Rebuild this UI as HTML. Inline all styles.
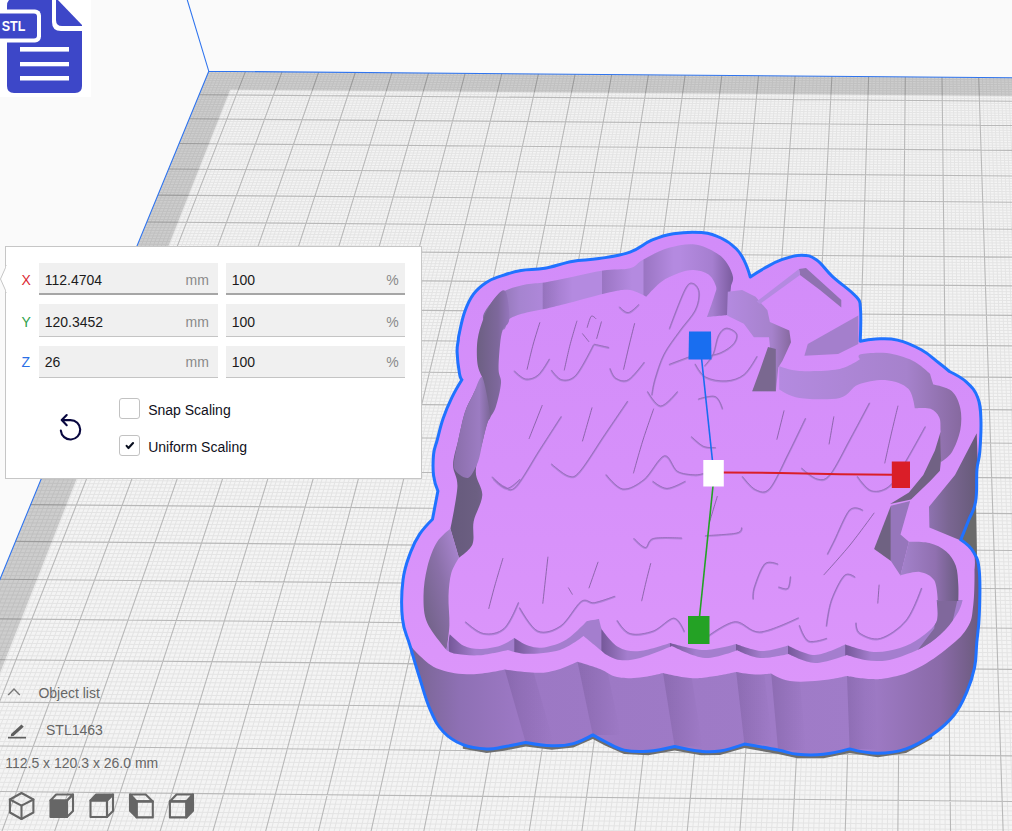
<!DOCTYPE html>
<html><head><meta charset="utf-8">
<style>
html,body{margin:0;padding:0;width:1012px;height:831px;overflow:hidden;background:#fafafa;font-family:"Liberation Sans",sans-serif;}
#scene{position:absolute;left:0;top:0;}
.abs{position:absolute;}
#stl{position:absolute;left:0;top:0;width:91px;height:97px;background:#fff;}
#panel{position:absolute;left:5px;top:246px;width:417px;height:233px;background:#fff;border:1px solid #c6c6c6;box-sizing:border-box;}
.lbl{position:absolute;font-size:14px;}
.fld{position:absolute;background:#f0f0f0;border-bottom:1px solid #c4c4c4;box-sizing:border-box;height:32px;}
.fld .v{position:absolute;left:5px;top:8px;font-size:14px;color:#1a1a1a;}
.fld .u{position:absolute;right:8px;top:8px;font-size:14px;color:#8c8c8c;}
.cb{position:absolute;width:21px;height:21px;border:1px solid #c2c2c2;border-radius:3px;box-sizing:border-box;background:#fff;}
.t{position:absolute;font-size:14px;line-height:14px;white-space:nowrap;}
.lab{}
.val{color:#1b1b1b;}
.unit{color:#8a8a8a;}
.ctext{position:absolute;font-size:14px;color:#101020;}
.scn{position:absolute;font-size:14px;color:#666;}
</style></head><body>
<svg id="scene" width="1012" height="831" viewBox="0 0 1012 831">
<polygon points="208.8,71.3 1070.6,78.2 1140.5,899.7 -126.5,886.9" fill="#f4f4f4"/>
<path d="M212.5 71.3L-121.2 886.9M216.2 71.3L-115.8 887.0M219.8 71.4L-110.4 887.0M223.5 71.4L-105.0 887.1M227.1 71.4L-99.7 887.1M230.8 71.5L-94.3 887.2M234.5 71.5L-88.9 887.2M238.1 71.5L-83.5 887.3M241.8 71.5L-78.2 887.4M249.1 71.6L-67.4 887.5M252.8 71.6L-62.0 887.5M256.4 71.7L-56.7 887.6M260.1 71.7L-51.3 887.6M263.7 71.7L-45.9 887.7M267.4 71.8L-40.5 887.7M271.1 71.8L-35.2 887.8M274.7 71.8L-29.8 887.8M278.4 71.8L-24.4 887.9M285.7 71.9L-13.7 888.0M289.4 71.9L-8.3 888.1M293.0 72.0L-2.9 888.1M296.7 72.0L2.5 888.2M300.3 72.0L7.9 888.2M304.0 72.0L13.2 888.3M307.7 72.1L18.6 888.3M311.3 72.1L24.0 888.4M315.0 72.1L29.4 888.4M322.3 72.2L40.1 888.6M326.0 72.2L45.5 888.6M329.6 72.2L50.9 888.7M333.3 72.3L56.3 888.7M336.9 72.3L61.6 888.8M340.6 72.3L67.0 888.8M344.3 72.4L72.4 888.9M347.9 72.4L77.8 888.9M351.6 72.4L83.2 889.0M358.9 72.5L93.9 889.1M362.6 72.5L99.3 889.1M366.2 72.5L104.7 889.2M369.9 72.6L110.1 889.3M373.6 72.6L115.4 889.3M377.2 72.6L120.8 889.4M380.9 72.7L126.2 889.4M384.5 72.7L131.6 889.5M388.2 72.7L137.0 889.5M395.5 72.8L147.7 889.6M399.2 72.8L153.1 889.7M402.9 72.8L158.5 889.7M406.5 72.9L163.9 889.8M410.2 72.9L169.3 889.9M413.8 72.9L174.6 889.9M417.5 73.0L180.0 890.0M421.2 73.0L185.4 890.0M424.8 73.0L190.8 890.1M432.2 73.1L201.6 890.2M435.8 73.1L206.9 890.2M439.5 73.1L212.3 890.3M443.2 73.2L217.7 890.3M446.8 73.2L223.1 890.4M450.5 73.2L228.5 890.5M454.1 73.2L233.9 890.5M457.8 73.3L239.2 890.6M461.5 73.3L244.6 890.6M468.8 73.4L255.4 890.7M472.5 73.4L260.8 890.8M476.1 73.4L266.2 890.8M479.8 73.5L271.5 890.9M483.5 73.5L276.9 890.9M487.1 73.5L282.3 891.0M490.8 73.5L287.7 891.1M494.4 73.6L293.1 891.1M498.1 73.6L298.5 891.2M505.4 73.7L309.2 891.3M509.1 73.7L314.6 891.3M512.8 73.7L320.0 891.4M516.4 73.7L325.4 891.4M520.1 73.8L330.8 891.5M523.8 73.8L336.2 891.5M527.4 73.8L341.6 891.6M531.1 73.9L346.9 891.7M534.8 73.9L352.3 891.7M542.1 73.9L363.1 891.8M545.8 74.0L368.5 891.9M549.4 74.0L373.9 891.9M553.1 74.0L379.3 892.0M556.7 74.1L384.7 892.0M560.4 74.1L390.1 892.1M564.1 74.1L395.4 892.1M567.7 74.2L400.8 892.2M571.4 74.2L406.2 892.3M578.7 74.2L417.0 892.4M582.4 74.3L422.4 892.4M586.1 74.3L427.8 892.5M589.7 74.3L433.2 892.5M593.4 74.4L438.6 892.6M597.1 74.4L443.9 892.6M600.7 74.4L449.3 892.7M604.4 74.4L454.7 892.7M608.1 74.5L460.1 892.8M615.4 74.5L470.9 892.9M619.1 74.6L476.3 893.0M622.7 74.6L481.7 893.0M626.4 74.6L487.1 893.1M630.1 74.7L492.5 893.1M633.7 74.7L497.8 893.2M637.4 74.7L503.2 893.2M641.1 74.7L508.6 893.3M644.7 74.8L514.0 893.3M652.1 74.8L524.8 893.5M655.7 74.9L530.2 893.5M659.4 74.9L535.6 893.6M663.1 74.9L541.0 893.6M666.7 74.9L546.4 893.7M670.4 75.0L551.8 893.7M674.1 75.0L557.2 893.8M677.7 75.0L562.6 893.8M681.4 75.1L567.9 893.9M688.7 75.1L578.7 894.0M692.4 75.2L584.1 894.1M696.1 75.2L589.5 894.1M699.8 75.2L594.9 894.2M703.4 75.2L600.3 894.2M707.1 75.3L605.7 894.3M710.8 75.3L611.1 894.3M714.4 75.3L616.5 894.4M718.1 75.4L621.9 894.4M725.4 75.4L632.7 894.5M729.1 75.4L638.1 894.6M732.8 75.5L643.5 894.7M736.4 75.5L648.9 894.7M740.1 75.5L654.3 894.8M743.8 75.6L659.7 894.8M747.4 75.6L665.1 894.9M751.1 75.6L670.4 894.9M754.8 75.6L675.8 895.0M762.1 75.7L686.6 895.1M765.8 75.7L692.0 895.1M769.5 75.8L697.4 895.2M773.1 75.8L702.8 895.3M776.8 75.8L708.2 895.3M780.5 75.9L713.6 895.4M784.1 75.9L719.0 895.4M787.8 75.9L724.4 895.5M791.5 75.9L729.8 895.5M798.8 76.0L740.6 895.6M802.5 76.0L746.0 895.7M806.2 76.1L751.4 895.7M809.8 76.1L756.8 895.8M813.5 76.1L762.2 895.9M817.2 76.1L767.6 895.9M820.8 76.2L773.0 896.0M824.5 76.2L778.4 896.0M828.2 76.2L783.8 896.1M835.5 76.3L794.6 896.2M839.2 76.3L800.0 896.2M842.9 76.4L805.4 896.3M846.5 76.4L810.8 896.3M850.2 76.4L816.2 896.4M853.9 76.4L821.6 896.5M857.5 76.5L827.0 896.5M861.2 76.5L832.4 896.6M864.9 76.5L837.8 896.6M872.2 76.6L848.6 896.7M875.9 76.6L854.0 896.8M879.6 76.6L859.4 896.8M883.2 76.7L864.8 896.9M886.9 76.7L870.2 896.9M890.6 76.7L875.6 897.0M894.3 76.8L881.0 897.1M897.9 76.8L886.4 897.1M901.6 76.8L891.8 897.2M909.0 76.9L902.6 897.3M912.6 76.9L908.0 897.3M916.3 76.9L913.4 897.4M920.0 77.0L918.8 897.4M923.6 77.0L924.2 897.5M927.3 77.0L929.6 897.5M931.0 77.1L935.0 897.6M934.7 77.1L940.4 897.7M938.3 77.1L945.8 897.7M945.7 77.2L956.7 897.8M949.3 77.2L962.1 897.9M953.0 77.2L967.5 897.9M956.7 77.3L972.9 898.0M960.4 77.3L978.3 898.0M964.0 77.3L983.7 898.1M967.7 77.4L989.1 898.1M971.4 77.4L994.5 898.2M975.1 77.4L999.9 898.3M982.4 77.5L1010.7 898.4M986.1 77.5L1016.1 898.4M989.8 77.5L1021.5 898.5M993.4 77.6L1026.9 898.5M997.1 77.6L1032.3 898.6M1000.8 77.6L1037.7 898.6M1004.5 77.6L1043.1 898.7M1008.1 77.7L1048.5 898.7M1011.8 77.7L1054.0 898.8M1019.1 77.8L1064.8 898.9M1022.8 77.8L1070.2 899.0M1026.5 77.8L1075.6 899.0M1030.2 77.9L1081.0 899.1M1033.8 77.9L1086.4 899.1M1037.5 77.9L1091.8 899.2M1041.2 77.9L1097.2 899.2M1044.9 78.0L1102.6 899.3M1048.5 78.0L1108.0 899.3M1055.9 78.1L1118.8 899.5M1059.6 78.1L1124.3 899.5M1063.2 78.1L1129.7 899.6M1066.9 78.1L1135.1 899.6M1070.6 78.2L1140.5 899.7M207.9 73.6L1070.8 80.5M206.9 75.9L1071.0 82.8M206.0 78.2L1071.2 85.2M205.0 80.6L1071.4 87.5M204.1 82.9L1071.6 89.9M203.1 85.3L1071.8 92.2M202.1 87.6L1072.0 94.6M201.2 90.0L1072.2 97.0M200.2 92.3L1072.4 99.4M198.2 97.1L1072.8 104.1M197.3 99.5L1073.0 106.5M196.3 101.9L1073.2 108.9M195.3 104.3L1073.4 111.4M194.3 106.7L1073.6 113.8M193.3 109.1L1073.8 116.2M192.3 111.5L1074.0 118.6M191.3 113.9L1074.2 121.1M190.3 116.3L1074.4 123.5M188.3 121.2L1074.9 128.4M187.3 123.7L1075.1 130.9M186.3 126.1L1075.3 133.4M185.3 128.6L1075.5 135.8M184.3 131.1L1075.7 138.3M183.2 133.5L1075.9 140.8M182.2 136.0L1076.1 143.3M181.2 138.5L1076.3 145.8M180.2 141.0L1076.6 148.3M178.1 146.0L1077.0 153.4M177.1 148.6L1077.2 155.9M176.0 151.1L1077.4 158.5M175.0 153.6L1077.6 161.0M173.9 156.2L1077.9 163.6M172.9 158.7L1078.1 166.1M171.8 161.3L1078.3 168.7M170.8 163.8L1078.5 171.3M169.7 166.4L1078.7 173.9M167.6 171.5L1079.2 179.1M166.6 174.1L1079.4 181.7M165.5 176.7L1079.6 184.3M164.4 179.3L1079.8 186.9M163.3 181.9L1080.1 189.5M162.3 184.6L1080.3 192.2M161.2 187.2L1080.5 194.8M160.1 189.8L1080.7 197.5M159.0 192.5L1081.0 200.1M156.8 197.8L1081.4 205.5M155.7 200.4L1081.7 208.2M154.6 203.1L1081.9 210.8M153.5 205.8L1082.1 213.5M152.4 208.5L1082.3 216.2M151.3 211.2L1082.6 219.0M150.2 213.9L1082.8 221.7M149.1 216.6L1083.0 224.4M148.0 219.3L1083.3 227.1M145.7 224.8L1083.7 232.6M144.6 227.5L1084.0 235.4M143.5 230.3L1084.2 238.2M142.3 233.0L1084.4 241.0M141.2 235.8L1084.7 243.7M140.1 238.6L1084.9 246.5M138.9 241.3L1085.2 249.3M137.8 244.1L1085.4 252.1M136.6 246.9L1085.6 255.0M134.3 252.6L1086.1 260.6M133.1 255.4L1086.4 263.5M132.0 258.2L1086.6 266.3M130.8 261.1L1086.8 269.2M129.6 263.9L1087.1 272.0M128.5 266.8L1087.3 274.9M127.3 269.6L1087.6 277.8M126.1 272.5L1087.8 280.7M124.9 275.4L1088.1 283.6M122.5 281.2L1088.6 289.4M121.3 284.1L1088.8 292.4M120.1 287.0L1089.1 295.3M118.9 289.9L1089.3 298.2M117.7 292.9L1089.6 301.2M116.5 295.8L1089.8 304.2M115.3 298.8L1090.1 307.1M114.1 301.7L1090.3 310.1M112.9 304.7L1090.6 313.1M110.4 310.7L1091.1 319.1M109.2 313.7L1091.3 322.1M107.9 316.7L1091.6 325.2M106.7 319.7L1091.9 328.2M105.4 322.7L1092.1 331.2M104.2 325.8L1092.4 334.3M102.9 328.8L1092.6 337.4M101.7 331.9L1092.9 340.4M100.4 334.9L1093.2 343.5M97.9 341.1L1093.7 349.7M96.6 344.2L1094.0 352.8M95.4 347.3L1094.2 356.0M94.1 350.4L1094.5 359.1M92.8 353.5L1094.8 362.2M91.5 356.6L1095.0 365.4M90.2 359.8L1095.3 368.5M88.9 362.9L1095.6 371.7M87.6 366.1L1095.8 374.9M85.0 372.4L1096.4 381.3M83.7 375.6L1096.7 384.5M82.4 378.8L1096.9 387.7M81.1 382.0L1097.2 391.0M79.7 385.2L1097.5 394.2M78.4 388.5L1097.8 397.4M77.1 391.7L1098.0 400.7M75.7 394.9L1098.3 404.0M74.4 398.2L1098.6 407.3M71.7 404.8L1099.2 413.9M70.4 408.0L1099.4 417.2M69.0 411.3L1099.7 420.5M67.6 414.7L1100.0 423.8M66.3 418.0L1100.3 427.2M64.9 421.3L1100.6 430.5M63.5 424.7L1100.9 433.9M62.1 428.0L1101.1 437.3M60.8 431.4L1101.4 440.7M58.0 438.1L1102.0 447.5M56.6 441.5L1102.3 450.9M55.2 444.9L1102.6 454.3M53.8 448.4L1102.9 457.8M52.4 451.8L1103.2 461.2M51.0 455.2L1103.5 464.7M49.5 458.7L1103.8 468.2M48.1 462.2L1104.1 471.7M46.7 465.6L1104.4 475.2M43.8 472.6L1105.0 482.2M42.4 476.1L1105.3 485.7M40.9 479.7L1105.6 489.3M39.5 483.2L1105.9 492.9M38.0 486.7L1106.2 496.4M36.5 490.3L1106.5 500.0M35.1 493.9L1106.8 503.6M33.6 497.4L1107.1 507.2M32.1 501.0L1107.4 510.8M29.2 508.3L1108.0 518.1M27.7 511.9L1108.3 521.8M26.2 515.5L1108.6 525.4M24.7 519.2L1109.0 529.1M23.2 522.8L1109.3 532.8M21.6 526.5L1109.6 536.5M20.1 530.2L1109.9 540.2M18.6 533.9L1110.2 544.0M17.1 537.6L1110.5 547.7M14.0 545.1L1111.2 555.2M12.5 548.8L1111.5 559.0M10.9 552.6L1111.8 562.8M9.4 556.4L1112.1 566.6M7.8 560.2L1112.5 570.4M6.2 564.0L1112.8 574.2M4.7 567.8L1113.1 578.1M3.1 571.6L1113.5 582.0M1.5 575.5L1113.8 585.8M-1.7 583.2L1114.4 593.6M-3.3 587.1L1114.8 597.5M-4.9 591.0L1115.1 601.5M-6.5 594.9L1115.4 605.4M-8.1 598.8L1115.8 609.3M-9.7 602.8L1116.1 613.3M-11.3 606.7L1116.5 617.3M-13.0 610.7L1116.8 621.3M-14.6 614.7L1117.1 625.3M-17.9 622.7L1117.8 633.4M-19.5 626.7L1118.2 637.4M-21.2 630.7L1118.5 641.5M-22.9 634.8L1118.9 645.6M-24.5 638.8L1119.2 649.7M-26.2 642.9L1119.6 653.8M-27.9 647.0L1119.9 657.9M-29.6 651.1L1120.3 662.0M-31.3 655.2L1120.6 666.2M-34.7 663.5L1121.3 674.5M-36.4 667.7L1121.7 678.7M-38.1 671.9L1122.0 682.9M-39.9 676.1L1122.4 687.2M-41.6 680.3L1122.8 691.4M-43.3 684.5L1123.1 695.7M-45.1 688.7L1123.5 700.0M-46.8 693.0L1123.9 704.2M-48.6 697.3L1124.2 708.6M-52.1 705.9L1125.0 717.2M-53.9 710.2L1125.3 721.6M-55.7 714.5L1125.7 725.9M-57.5 718.9L1126.1 730.3M-59.3 723.2L1126.5 734.7M-61.1 727.6L1126.8 739.1M-62.9 732.0L1127.2 743.6M-64.7 736.4L1127.6 748.0M-66.5 740.9L1128.0 752.5M-70.2 749.8L1128.7 761.5M-72.0 754.3L1129.1 766.0M-73.9 758.8L1129.5 770.5M-75.7 763.3L1129.9 775.1M-77.6 767.8L1130.3 779.6M-79.5 772.4L1130.7 784.2M-81.3 776.9L1131.1 788.8M-83.2 781.5L1131.4 793.5M-85.1 786.1L1131.8 798.1M-88.9 795.4L1132.6 807.4M-90.8 800.0L1133.0 812.1M-92.7 804.7L1133.4 816.8M-94.7 809.4L1133.8 821.5M-96.6 814.1L1134.2 826.3M-98.5 818.8L1134.6 831.0M-100.5 823.5L1135.1 835.8M-102.5 828.3L1135.5 840.6M-104.4 833.1L1135.9 845.4M-108.4 842.7L1136.7 855.1M-110.4 847.5L1137.1 860.0M-112.4 852.4L1137.5 864.9M-114.4 857.2L1137.9 869.8M-116.4 862.1L1138.4 874.7M-118.4 867.0L1138.8 879.7M-120.4 872.0L1139.2 884.7M-122.4 876.9L1139.6 889.6M-124.5 881.9L1140.1 894.6" stroke="#e4e4e4" stroke-width="1" fill="none"/>
<path d="M245.4 71.6L-72.8 887.4M282.0 71.9L-19.0 888.0M318.6 72.2L34.7 888.5M355.3 72.5L88.5 889.0M391.9 72.7L142.3 889.6M428.5 73.0L196.2 890.1M465.1 73.3L250.0 890.7M501.8 73.6L303.9 891.2M538.4 73.9L357.7 891.8M575.1 74.2L411.6 892.3M611.7 74.5L465.5 892.9M648.4 74.8L519.4 893.4M685.1 75.1L573.3 893.9M721.8 75.4L627.3 894.5M758.5 75.7L681.2 895.0M795.1 76.0L735.2 895.6M831.9 76.3L789.2 896.1M868.6 76.6L843.2 896.7M905.3 76.9L897.2 897.2M942.0 77.1L951.3 897.8M978.7 77.4L1005.3 898.3M1015.5 77.7L1059.4 898.9M1052.2 78.0L1113.4 899.4M199.2 94.7L1072.6 101.7M189.3 118.8L1074.7 126.0M179.1 143.5L1076.8 150.9M168.7 169.0L1079.0 176.5M157.9 195.1L1081.2 202.8M146.9 222.0L1083.5 229.9M135.5 249.7L1085.9 257.8M123.7 278.3L1088.3 286.5M111.6 307.7L1090.8 316.1M99.2 338.0L1093.4 346.6M86.3 369.2L1096.1 378.1M73.1 401.5L1098.9 410.6M59.4 434.8L1101.7 444.1M45.2 469.1L1104.7 478.7M30.6 504.6L1107.7 514.5M15.5 541.4L1110.9 551.4M-0.1 579.3L1114.1 589.7M-16.2 618.7L1117.5 629.3M-33.0 659.4L1121.0 670.4M-50.3 701.6L1124.6 712.9M-68.3 745.3L1128.3 757.0M-87.0 790.7L1132.2 802.7M-106.4 837.9L1136.3 850.3M-126.5 886.9L1140.5 899.7" stroke="#b8b8b8" stroke-width="1.1" fill="none"/>
<path d="M208.8,71.3 L1070.6,78.2 L1072.2,96.5 L230.2,89.7 L-84.6,887.3 L-126.5,886.9 Z" fill="#000" fill-opacity="0.157"/>
<path d="M187,-1 L208.8,71.3 L1070.6,78.2 M208.8,71.3 L-126.5,886.9" stroke="#2f74ee" stroke-width="1.1" fill="none"/>
<defs>
<linearGradient id="glt" gradientUnits="userSpaceOnUse" x1="0" y1="240" x2="0" y2="690"><stop offset="0" stop-color="#d28cf9"/><stop offset="0.5" stop-color="#d690fa"/><stop offset="1" stop-color="#dc96fa"/></linearGradient>
<linearGradient id="gn" x1="0" y1="0" x2="1" y2="0"><stop offset="0" stop-color="#8e72b0"/><stop offset="0.4" stop-color="#7a6692"/><stop offset="1" stop-color="#665a78"/></linearGradient>
<linearGradient id="gh" x1="0" y1="0" x2="1" y2="0"><stop offset="0" stop-color="#a482cc"/><stop offset="0.6" stop-color="#9070b0"/><stop offset="1" stop-color="#6a5c80"/></linearGradient>
<linearGradient id="gmw" x1="0" y1="0" x2="1" y2="0"><stop offset="0" stop-color="#8a6eaa"/><stop offset="0.7" stop-color="#9c7cc2"/><stop offset="1" stop-color="#7a6696"/></linearGradient>
<linearGradient id="gw" x1="0" y1="0" x2="1" y2="0"><stop offset="0" stop-color="#73628a"/><stop offset="0.1" stop-color="#8e70b4"/><stop offset="0.2" stop-color="#9c78c4"/><stop offset="0.8" stop-color="#a07cc8"/><stop offset="0.93" stop-color="#8a6aa8"/><stop offset="1" stop-color="#6a5a7c"/></linearGradient>
<linearGradient id="gl" gradientUnits="userSpaceOnUse" x1="450" y1="0" x2="510" y2="0"><stop offset="0" stop-color="#665a7c"/><stop offset="0.45" stop-color="#6c5f82"/><stop offset="0.8" stop-color="#7e689c"/><stop offset="1" stop-color="#9676be"/></linearGradient>
<linearGradient id="gm" x1="0" y1="0" x2="1" y2="0"><stop offset="0" stop-color="#b48ae0"/><stop offset="0.7" stop-color="#a682cc"/><stop offset="1" stop-color="#86699f"/></linearGradient>
<linearGradient id="gc" x1="1" y1="0" x2="0" y2="1"><stop offset="0" stop-color="#b08ad8"/><stop offset="0.45" stop-color="#8a70a8"/><stop offset="1" stop-color="#6a5e7e"/></linearGradient>
<linearGradient id="gs" x1="0" y1="0" x2="1" y2="0"><stop offset="0" stop-color="#3c2a58" stop-opacity="0.18"/><stop offset="1" stop-color="#3c2a58" stop-opacity="0"/></linearGradient>
</defs>
<path d="M462.8,738.7 L462.8,748.7 L486.7,753.0 L504.0,750.8 L525.7,746.5 L551.7,749.8 L573.3,747.6 L592.8,738.9 L605.0,745.5 L624.1,754.1 L648.1,755.3 L674.6,750.5 L701.1,755.3 L720.0,755.0 L744.4,748.1 L778.1,754.0 L797.4,758.3 L823.5,758.3 L849.6,752.9 L877.8,757.3 L906.1,752.9 L932.2,738.8 L932.2,728.8 Z" fill="#6e6e6e"/>
<path d="M958.0,542.0 L976.0,498.0 L977.0,556.0 Z" fill="#6a6a6a"/>
<path d="M458.3,340.0 C458.7,336.3 458.0,339.0 459.3,333.3 C460.6,327.6 461.9,319.5 464.7,311.7 C467.5,303.9 469.0,300.2 473.3,294.3 C477.6,288.4 480.7,286.1 486.3,282.4 C491.9,278.7 494.6,278.3 501.5,275.9 C508.4,273.5 512.3,272.0 521.0,270.5 C529.7,269.0 534.6,270.1 544.8,268.3 C555.0,266.5 561.2,263.3 572.0,261.4 C582.8,259.5 587.4,260.5 599.0,258.6 C610.6,256.7 619.5,255.8 630.0,252.1 C640.5,248.4 643.0,243.9 651.7,240.2 C660.4,236.5 663.3,235.2 673.3,233.7 C683.3,232.2 692.0,231.7 701.5,232.6 C711.0,233.5 714.1,234.8 721.0,238.0 C727.9,241.2 731.4,244.0 736.2,248.8 C741.0,253.6 742.0,256.2 744.8,261.8 C747.6,267.4 750.3,277.0 750.3,277.0 C750.3,277.0 758.0,271.8 764.3,268.3 C770.6,264.8 774.3,262.3 781.7,259.7 C789.1,257.1 794.3,255.3 801.2,255.3 C808.1,255.3 810.1,255.5 816.3,259.7 C822.5,263.9 824.5,269.0 832.3,276.3 C840.1,283.6 849.9,289.8 855.5,296.1 C861.1,302.4 859.5,298.7 860.4,307.7 C861.3,316.7 860.2,341.2 860.2,341.2 C860.2,341.2 868.3,339.2 875.8,339.0 C883.3,338.8 888.4,337.9 897.5,340.1 C906.6,342.3 913.1,345.3 921.3,349.8 C929.5,354.3 933.1,358.5 938.7,362.8 C944.3,367.1 949.5,371.5 949.5,371.5 C949.5,371.5 961.2,377.1 966.8,382.3 C972.4,387.5 974.9,390.1 977.7,397.5 C980.5,404.9 980.5,408.4 980.9,419.2 C981.3,430.0 980.6,441.5 979.8,451.7 C979.0,461.9 977.7,460.1 976.9,470.0 C976.1,479.9 977.4,491.2 975.7,501.3 C974.0,511.4 971.5,512.8 968.5,520.5 C965.5,528.2 960.8,539.8 960.8,539.8 C960.8,539.8 969.6,545.5 973.3,551.8 C977.0,558.1 978.1,558.6 979.3,571.1 C980.5,583.6 979.8,599.9 979.3,614.4 C978.8,628.9 977.6,632.9 976.7,643.5 C975.8,654.1 976.5,657.8 974.6,667.4 C972.7,677.0 971.1,681.7 967.0,691.3 C962.9,700.9 960.9,706.5 953.9,715.2 C946.9,723.9 941.8,728.1 932.2,734.8 C922.6,741.5 917.0,745.2 906.1,748.9 C895.2,752.6 889.1,753.3 877.8,753.3 C866.5,753.3 849.6,748.9 849.6,748.9 C849.6,748.9 833.9,753.2 823.5,754.3 C813.1,755.4 806.5,755.2 797.4,754.3 C788.3,753.4 788.7,752.0 778.1,750.0 C767.5,748.0 744.4,744.1 744.4,744.1 C744.4,744.1 728.7,749.6 720.0,751.0 C711.3,752.4 710.2,752.2 701.1,751.3 C692.0,750.4 674.6,746.5 674.6,746.5 C674.6,746.5 658.2,750.6 648.1,751.3 C638.0,752.0 632.7,752.1 624.1,750.1 C615.5,748.1 611.3,744.5 605.0,741.5 C598.7,738.5 592.8,734.9 592.8,734.9 C592.8,734.9 581.5,741.4 573.3,743.6 C565.1,745.8 561.2,746.0 551.7,745.8 C542.2,745.6 525.7,742.5 525.7,742.5 C525.7,742.5 511.8,745.5 504.0,746.8 C496.2,748.1 494.9,749.4 486.7,749.0 C478.5,748.6 471.5,748.2 462.8,744.7 C454.1,741.2 449.8,738.6 443.3,731.7 C436.8,724.8 435.1,720.8 430.3,710.0 C425.5,699.2 423.6,690.5 419.5,677.5 C415.4,664.5 413.2,656.7 409.8,645.0 C406.4,633.3 403.9,632.0 402.5,619.0 C401.1,606.0 401.3,593.5 403.0,580.0 C404.7,566.5 407.5,560.8 410.8,551.7 C414.1,542.6 415.2,540.8 419.5,534.3 C423.8,527.8 432.5,519.2 432.5,519.2 C432.5,519.2 437.9,491.0 437.9,491.0 C437.9,491.0 434.5,483.2 433.6,475.8 C432.7,468.4 432.9,461.4 433.6,454.2 C434.3,447.0 435.3,447.2 437.2,440.0 C439.1,432.8 440.3,426.6 443.2,418.2 C446.1,409.8 448.0,405.5 451.7,397.8 C455.4,390.1 461.9,379.7 461.9,379.7 C461.9,379.7 460.5,379.2 459.5,373.7 C458.5,368.2 457.3,358.7 457.1,352.0 C456.9,345.3 457.9,343.7 458.3,340.0 Z" fill="url(#gw)"/>
<path d="M504.8,669.6 L532.8,669.6 L553.7,742.5 L525.7,742.5 Z" fill="url(#gs)"/>
<path d="M577.5,661.7 L605.5,661.7 L620.8,734.9 L592.8,734.9 Z" fill="url(#gs)"/>
<path d="M663.0,673.0 L691.0,673.0 L702.6,746.5 L674.6,746.5 Z" fill="url(#gs)"/>
<path d="M736.2,672.0 L764.2,672.0 L772.4,744.1 L744.4,744.1 Z" fill="url(#gs)"/>
<path d="M771.2,673.6 L799.2,673.6 L806.1,750.0 L778.1,750.0 Z" fill="url(#gs)"/>
<path d="M847.0,676.0 L875.0,676.0 L877.6,748.9 L849.6,748.9 Z" fill="url(#gs)"/>
<path d="M402.5,619.0 C402.5,619.0 401.3,593.5 403.0,580.0 C404.7,566.5 407.5,560.8 410.8,551.7 C414.1,542.6 415.2,540.8 419.5,534.3 C423.8,527.8 432.5,519.2 432.5,519.2 C432.5,519.2 437.9,491.0 437.9,491.0 C437.9,491.0 434.5,483.2 433.6,475.8 C432.7,468.4 432.9,461.4 433.6,454.2 C434.3,447.0 435.3,447.2 437.2,440.0 C439.1,432.8 440.3,426.6 443.2,418.2 C446.1,409.8 448.0,405.5 451.7,397.8 C455.4,390.1 461.9,379.7 461.9,379.7 C461.9,379.7 460.5,379.2 459.5,373.7 C458.5,368.2 457.3,358.7 457.1,352.0 C456.9,345.3 457.9,343.7 458.3,340.0 C458.7,336.3 458.0,339.0 459.3,333.3 C460.6,327.6 461.9,319.5 464.7,311.7 C467.5,303.9 469.0,300.2 473.3,294.3 C477.6,288.4 480.7,286.1 486.3,282.4 C491.9,278.7 494.6,278.3 501.5,275.9 C508.4,273.5 512.3,272.0 521.0,270.5 C529.7,269.0 534.6,270.1 544.8,268.3 C555.0,266.5 561.2,263.3 572.0,261.4 C582.8,259.5 587.4,260.5 599.0,258.6 C610.6,256.7 619.5,255.8 630.0,252.1 C640.5,248.4 643.0,243.9 651.7,240.2 C660.4,236.5 663.3,235.2 673.3,233.7 C683.3,232.2 692.0,231.7 701.5,232.6 C711.0,233.5 714.1,234.8 721.0,238.0 C727.9,241.2 731.4,244.0 736.2,248.8 C741.0,253.6 742.0,256.2 744.8,261.8 C747.6,267.4 750.3,277.0 750.3,277.0 C750.3,277.0 758.0,271.8 764.3,268.3 C770.6,264.8 774.3,262.3 781.7,259.7 C789.1,257.1 794.3,255.3 801.2,255.3 C808.1,255.3 810.1,255.5 816.3,259.7 C822.5,263.9 824.5,269.0 832.3,276.3 C840.1,283.6 849.9,289.8 855.5,296.1 C861.1,302.4 859.5,298.7 860.4,307.7 C861.3,316.7 860.2,341.2 860.2,341.2 C860.2,341.2 868.3,339.2 875.8,339.0 C883.3,338.8 888.4,337.9 897.5,340.1 C906.6,342.3 913.1,345.3 921.3,349.8 C929.5,354.3 933.1,358.5 938.7,362.8 C944.3,367.1 949.5,371.5 949.5,371.5 C949.5,371.5 961.2,377.1 966.8,382.3 C972.4,387.5 974.9,390.1 977.7,397.5 C980.5,404.9 980.5,408.4 980.9,419.2 C981.3,430.0 980.6,441.5 979.8,451.7 C979.0,461.9 977.7,460.1 976.9,470.0 C976.1,479.9 977.4,491.2 975.7,501.3 C974.0,511.4 971.5,512.8 968.5,520.5 C965.5,528.2 960.8,539.8 960.8,539.8 C960.8,539.8 970.6,545.8 973.3,551.8 C976.0,557.8 974.5,570.0 974.5,570.0 C974.5,570.0 974.8,593.1 973.3,604.8 C971.8,616.5 972.6,619.3 967.0,628.3 C961.4,637.3 955.6,641.7 945.2,650.0 C934.8,658.3 925.8,664.1 914.8,669.6 C903.8,675.1 899.0,675.6 890.0,677.5 C881.0,679.4 878.6,679.3 870.0,679.0 C861.4,678.7 847.0,676.0 847.0,676.0 C847.0,676.0 831.4,679.5 820.0,680.5 C808.6,681.5 799.8,682.4 790.0,681.0 C780.2,679.6 771.2,673.6 771.2,673.6 C771.2,673.6 762.0,674.8 755.0,674.5 C748.0,674.2 736.2,672.0 736.2,672.0 C736.2,672.0 721.2,675.3 712.0,676.5 C702.8,677.7 699.8,678.7 690.0,678.0 C680.2,677.3 663.0,673.0 663.0,673.0 C663.0,673.0 649.2,676.7 640.0,677.5 C630.8,678.3 625.0,678.7 617.0,677.0 C609.0,675.3 607.9,672.1 600.0,669.0 C592.1,665.9 577.5,661.7 577.5,661.7 C577.5,661.7 563.5,668.3 555.0,670.5 C546.5,672.7 544.9,672.9 534.9,672.7 C524.9,672.5 504.8,669.6 504.8,669.6 C504.8,669.6 484.6,674.3 471.6,674.3 C458.6,674.3 450.3,673.3 440.0,669.6 C429.7,665.9 426.3,661.4 420.0,656.0 C413.7,650.6 408.7,642.8 408.7,642.8 C408.7,642.8 402.5,619.0 402.5,619.0 Z" fill="url(#glt)"/>
<linearGradient id="gft" gradientUnits="userSpaceOnUse" x1="480" y1="0" x2="560" y2="0"><stop offset="0" stop-color="#7c6a9a"/><stop offset="0.5" stop-color="#a684d0"/><stop offset="1" stop-color="#b48ae0"/></linearGradient>
<path d="M483.3,319.0 C481.5,314.3 488.4,306.4 492.0,301.7 C495.6,297.0 499.2,293.7 505.0,290.8 C510.8,287.9 520.0,285.7 526.6,284.3 C533.2,282.9 537.2,283.6 544.8,282.4 C552.4,281.2 562.2,279.0 572.0,277.0 C581.8,275.0 593.6,271.9 603.3,270.5 C613.0,269.1 623.4,270.1 630.0,268.3 C636.6,266.5 636.5,263.1 643.0,259.7 C649.5,256.3 660.3,250.3 669.0,247.8 C677.7,245.3 687.0,243.6 695.0,244.5 C703.0,245.4 711.3,249.9 716.7,253.2 C722.1,256.4 724.8,260.0 727.5,264.0 C730.2,268.0 732.4,273.5 733.0,277.0 C733.6,280.5 731.2,285.0 731.2,285.0 C731.2,285.0 727.8,315.0 727.8,315.0 C727.8,315.0 707.1,317.0 707.1,317.0 C707.1,317.0 713.0,300.3 714.5,295.2 C716.0,290.1 717.0,289.8 716.0,286.3 C715.0,282.9 712.3,277.2 708.6,274.5 C704.9,271.8 698.7,270.2 693.7,270.0 C688.8,269.8 684.3,271.0 678.9,273.0 C673.5,275.0 666.5,277.9 661.1,281.9 C655.7,285.8 646.3,296.7 646.3,296.7 C646.3,296.7 636.1,290.8 630.0,290.0 C623.9,289.2 620.0,290.0 609.8,292.2 C599.6,294.4 579.2,300.3 568.7,303.0 C558.2,305.7 554.0,306.8 547.0,308.4 C540.0,310.0 532.9,310.7 526.6,312.5 C520.3,314.3 513.3,316.1 509.3,319.0 C505.3,321.9 507.1,329.8 502.8,329.8 C498.5,329.8 485.1,323.7 483.3,319.0 Z" fill="url(#gft)"/>
<clipPath id="ftc"><path d="M483.3,319.0 C481.5,314.3 488.4,306.4 492.0,301.7 C495.6,297.0 499.2,293.7 505.0,290.8 C510.8,287.9 520.0,285.7 526.6,284.3 C533.2,282.9 537.2,283.6 544.8,282.4 C552.4,281.2 562.2,279.0 572.0,277.0 C581.8,275.0 593.6,271.9 603.3,270.5 C613.0,269.1 623.4,270.1 630.0,268.3 C636.6,266.5 636.5,263.1 643.0,259.7 C649.5,256.3 660.3,250.3 669.0,247.8 C677.7,245.3 687.0,243.6 695.0,244.5 C703.0,245.4 711.3,249.9 716.7,253.2 C722.1,256.4 724.8,260.0 727.5,264.0 C730.2,268.0 732.4,273.5 733.0,277.0 C733.6,280.5 731.2,285.0 731.2,285.0 C731.2,285.0 727.8,315.0 727.8,315.0 C727.8,315.0 707.1,317.0 707.1,317.0 C707.1,317.0 713.0,300.3 714.5,295.2 C716.0,290.1 717.0,289.8 716.0,286.3 C715.0,282.9 712.3,277.2 708.6,274.5 C704.9,271.8 698.7,270.2 693.7,270.0 C688.8,269.8 684.3,271.0 678.9,273.0 C673.5,275.0 666.5,277.9 661.1,281.9 C655.7,285.8 646.3,296.7 646.3,296.7 C646.3,296.7 636.1,290.8 630.0,290.0 C623.9,289.2 620.0,290.0 609.8,292.2 C599.6,294.4 579.2,300.3 568.7,303.0 C558.2,305.7 554.0,306.8 547.0,308.4 C540.0,310.0 532.9,310.7 526.6,312.5 C520.3,314.3 513.3,316.1 509.3,319.0 C505.3,321.9 507.1,329.8 502.8,329.8 C498.5,329.8 485.1,323.7 483.3,319.0 Z"/></clipPath>
<linearGradient id="gs3" x1="0" y1="0" x2="1" y2="0"><stop offset="0" stop-color="#3c2a58" stop-opacity="0.22"/><stop offset="1" stop-color="#3c2a58" stop-opacity="0"/></linearGradient>
<rect x="542.7" y="230" width="30" height="100" fill="url(#gs3)" clip-path="url(#ftc)"/>
<rect x="602.0" y="230" width="30" height="100" fill="url(#gs3)" clip-path="url(#ftc)"/>
<rect x="643.5" y="230" width="30" height="100" fill="url(#gs3)" clip-path="url(#ftc)"/>
<linearGradient id="gfl" gradientUnits="userSpaceOnUse" x1="680" y1="0" x2="734" y2="0"><stop offset="0" stop-color="#3c2a58" stop-opacity="0"/><stop offset="0.6" stop-color="#3c2a58" stop-opacity="0.12"/><stop offset="1" stop-color="#3c2a58" stop-opacity="0.5"/></linearGradient>
<rect x="680" y="230" width="60" height="100" fill="url(#gfl)" clip-path="url(#ftc)"/>
<path d="M450.4,528.8 C450.4,528.8 456.9,497.3 457.4,486.7 C457.8,476.1 453.0,472.8 453.1,465.0 C453.2,457.2 456.3,448.8 458.3,440.0 C460.3,431.2 462.4,419.8 464.9,412.2 C467.4,404.6 470.4,400.0 473.3,394.2 C476.2,388.4 482.3,377.3 482.3,377.3 C482.3,377.3 478.3,370.3 477.5,364.1 C476.7,357.9 476.5,347.5 477.5,340.0 C478.5,332.5 480.9,325.4 483.3,319.0 C485.7,312.6 488.4,306.4 492.0,301.7 C495.6,297.0 502.1,287.9 505.0,290.8 C507.9,293.7 509.7,312.5 509.3,319.0 C508.9,325.5 504.4,325.5 502.8,329.8 C501.2,334.1 500.7,338.3 500.0,345.0 C499.3,351.7 498.4,363.7 498.6,370.1 C498.8,376.5 501.5,377.1 501.0,383.3 C500.5,389.5 497.8,401.0 495.6,407.4 C493.4,413.8 489.9,416.4 487.8,421.8 C485.7,427.2 485.0,431.7 483.0,440.0 C481.0,448.3 475.9,462.3 475.8,471.5 C475.7,480.7 482.7,487.0 482.3,495.3 C481.9,503.6 475.3,513.1 473.7,521.3 C472.1,529.4 474.9,538.1 472.5,544.2 C470.1,550.3 459.0,557.7 459.0,557.7 C459.0,557.7 450.4,528.8 450.4,528.8 Z" fill="url(#gl)"/>
<path d="M482.3,377.3 C484.6,380.0 489.5,408.7 490.2,414.6 C490.9,420.5 488.8,418.4 487.8,421.8 C486.8,425.2 484.3,434.6 483.0,440.0 C481.7,445.4 480.0,456.9 478.0,462.0 C476.0,467.1 471.2,477.2 468.0,478.0 C464.8,478.8 455.3,473.1 454.0,468.0 C452.7,462.9 456.8,447.4 458.3,440.0 C459.8,432.6 462.9,418.3 464.9,412.2 C466.9,406.1 471.0,398.9 473.3,394.2 C475.6,389.5 480.0,374.6 482.3,377.3 Z" fill="url(#gmw)"/>
<path d="M459.0,557.7 C459.0,557.7 450.4,528.8 450.4,528.8 C450.4,528.8 440.8,535.9 436.9,542.3 C433.0,548.7 429.5,558.3 427.3,567.3 C425.1,576.3 423.5,586.9 423.5,596.2 C423.5,605.5 423.5,614.1 427.3,623.1 C431.1,632.1 446.5,650.0 446.5,650.0 C446.5,650.0 449.1,634.0 449.4,625.0 C449.7,616.0 448.2,604.9 448.5,596.2 C448.8,587.5 449.6,579.4 451.3,573.0 C453.1,566.6 459.0,557.7 459.0,557.7 Z" fill="url(#gc)"/>
<path d="M449.8,634.2 C449.8,634.2 458.8,643.3 463.7,645.8 C468.6,648.3 473.4,649.0 479.5,649.0 C485.6,649.0 494.3,647.6 500.1,645.8 C505.9,643.9 514.3,637.9 514.3,637.9 C514.3,637.9 523.5,644.2 528.5,645.8 C533.5,647.4 538.0,648.4 544.3,647.4 C550.6,646.4 559.4,643.9 566.5,639.5 C573.6,635.1 587.0,621.0 587.0,621.0 C587.0,621.0 599.0,619.0 599.0,619.0 C599.0,619.0 601.4,628.9 601.4,628.9 C601.4,628.9 611.8,643.3 618.2,647.0 C624.6,650.7 631.4,651.7 640.0,651.0 C648.6,650.3 670.0,643.0 670.0,643.0 C670.0,643.0 693.0,649.8 704.0,650.0 C715.0,650.2 736.0,644.0 736.0,644.0 C736.0,644.0 753.3,650.8 762.0,651.0 C770.7,651.2 788.0,645.4 788.0,645.4 C788.0,645.4 805.5,655.1 815.0,655.0 C824.5,654.9 845.2,644.6 845.2,644.6 C845.2,644.6 864.4,651.4 873.5,652.0 C882.6,652.6 892.2,650.3 900.0,648.0 C907.8,645.7 913.9,642.4 920.0,638.0 C926.1,633.6 933.8,628.0 936.5,621.7 C939.2,615.4 936.5,600.0 936.5,600.0 C936.5,600.0 954.0,600.0 954.0,600.0 C954.0,600.0 962.6,600.0 962.6,600.0 C962.6,600.0 961.2,607.0 958.3,612.0 C955.4,617.0 950.5,624.3 945.0,630.0 C939.5,635.7 932.5,641.5 925.0,646.0 C917.5,650.5 907.1,654.5 900.0,657.0 C892.9,659.5 888.0,660.4 882.2,660.9 C876.4,661.4 870.9,661.0 865.0,660.0 C859.1,659.0 847.0,655.0 847.0,655.0 C847.0,655.0 824.7,663.2 815.0,663.0 C805.3,662.8 788.7,654.0 788.7,654.0 C788.7,654.0 768.6,658.6 760.0,658.0 C751.4,657.4 737.2,650.3 737.2,650.3 C737.2,650.3 715.9,658.7 705.0,658.0 C694.1,657.3 672.0,646.0 672.0,646.0 C672.0,646.0 648.7,655.7 640.0,658.0 C631.3,660.3 625.7,660.6 620.0,660.0 C614.3,659.4 605.6,654.2 605.6,654.2 C605.6,654.2 583.5,636.0 583.5,636.0 C583.5,636.0 569.4,647.0 560.0,650.0 C550.6,653.0 535.7,653.8 527.0,653.8 C518.3,653.8 508.0,650.0 508.0,650.0 C508.0,650.0 488.2,654.7 479.5,655.3 C470.8,655.9 461.3,654.7 455.8,653.8 C450.3,652.9 446.5,650.0 446.5,650.0 C446.5,650.0 449.8,634.2 449.8,634.2 Z" fill="#a47ece"/>
<clipPath id="nbc"><path d="M449.8,634.2 C449.8,634.2 458.8,643.3 463.7,645.8 C468.6,648.3 473.4,649.0 479.5,649.0 C485.6,649.0 494.3,647.6 500.1,645.8 C505.9,643.9 514.3,637.9 514.3,637.9 C514.3,637.9 523.5,644.2 528.5,645.8 C533.5,647.4 538.0,648.4 544.3,647.4 C550.6,646.4 559.4,643.9 566.5,639.5 C573.6,635.1 587.0,621.0 587.0,621.0 C587.0,621.0 599.0,619.0 599.0,619.0 C599.0,619.0 601.4,628.9 601.4,628.9 C601.4,628.9 611.8,643.3 618.2,647.0 C624.6,650.7 631.4,651.7 640.0,651.0 C648.6,650.3 670.0,643.0 670.0,643.0 C670.0,643.0 693.0,649.8 704.0,650.0 C715.0,650.2 736.0,644.0 736.0,644.0 C736.0,644.0 753.3,650.8 762.0,651.0 C770.7,651.2 788.0,645.4 788.0,645.4 C788.0,645.4 805.5,655.1 815.0,655.0 C824.5,654.9 845.2,644.6 845.2,644.6 C845.2,644.6 864.4,651.4 873.5,652.0 C882.6,652.6 892.2,650.3 900.0,648.0 C907.8,645.7 913.9,642.4 920.0,638.0 C926.1,633.6 933.8,628.0 936.5,621.7 C939.2,615.4 936.5,600.0 936.5,600.0 C936.5,600.0 954.0,600.0 954.0,600.0 C954.0,600.0 962.6,600.0 962.6,600.0 C962.6,600.0 961.2,607.0 958.3,612.0 C955.4,617.0 950.5,624.3 945.0,630.0 C939.5,635.7 932.5,641.5 925.0,646.0 C917.5,650.5 907.1,654.5 900.0,657.0 C892.9,659.5 888.0,660.4 882.2,660.9 C876.4,661.4 870.9,661.0 865.0,660.0 C859.1,659.0 847.0,655.0 847.0,655.0 C847.0,655.0 824.7,663.2 815.0,663.0 C805.3,662.8 788.7,654.0 788.7,654.0 C788.7,654.0 768.6,658.6 760.0,658.0 C751.4,657.4 737.2,650.3 737.2,650.3 C737.2,650.3 715.9,658.7 705.0,658.0 C694.1,657.3 672.0,646.0 672.0,646.0 C672.0,646.0 648.7,655.7 640.0,658.0 C631.3,660.3 625.7,660.6 620.0,660.0 C614.3,659.4 605.6,654.2 605.6,654.2 C605.6,654.2 583.5,636.0 583.5,636.0 C583.5,636.0 569.4,647.0 560.0,650.0 C550.6,653.0 535.7,653.8 527.0,653.8 C518.3,653.8 508.0,650.0 508.0,650.0 C508.0,650.0 488.2,654.7 479.5,655.3 C470.8,655.9 461.3,654.7 455.8,653.8 C450.3,652.9 446.5,650.0 446.5,650.0 C446.5,650.0 449.8,634.2 449.8,634.2 Z"/></clipPath>
<linearGradient id="gs2" x1="0" y1="0" x2="1" y2="0"><stop offset="0" stop-color="#3c2a58" stop-opacity="0.45"/><stop offset="1" stop-color="#3c2a58" stop-opacity="0"/></linearGradient>
<rect x="449.0" y="600" width="26" height="70" fill="url(#gs2)" clip-path="url(#nbc)"/>
<rect x="514.3" y="600" width="26" height="70" fill="url(#gs2)" clip-path="url(#nbc)"/>
<rect x="601.4" y="600" width="26" height="70" fill="url(#gs2)" clip-path="url(#nbc)"/>
<rect x="670.0" y="600" width="26" height="70" fill="url(#gs2)" clip-path="url(#nbc)"/>
<rect x="736.0" y="600" width="26" height="70" fill="url(#gs2)" clip-path="url(#nbc)"/>
<rect x="788.0" y="600" width="26" height="70" fill="url(#gs2)" clip-path="url(#nbc)"/>
<rect x="845.2" y="600" width="26" height="70" fill="url(#gs2)" clip-path="url(#nbc)"/>
<path d="M937.8,596 L958.3,596 L951,628.4 L929.4,660 L910.1,660 L934.2,628.4 Z" fill="#80689c" clip-path="url(#nbc)"/>
<path d="M727.8,291.8 L742.1,290.1 L755.6,296.8 L767.4,310.3 L769.9,322.1 L789.3,330.5 L791.0,342.3 L782.5,360.8 L778.3,367.6 L775.8,391.2 L752.2,391.2 L770.7,354.1 L769.0,337.3 L753.9,337.3 L743.8,323.8 L727.0,315.4 Z" fill="url(#gm)"/>
<path d="M768.0,347.0 L775.8,349.0 L775.8,391.2 L752.2,391.2 L760.0,370.0 Z" fill="#7a6890"/>
<path d="M799.0,268.9 L806.0,268.0 L841.3,300.0 L841.3,307.5 L820.0,290.0 L800.0,275.0 Z" fill="#8f72b0"/>
<path d="M756.6,301.6 L799.0,268.9 L800.0,275.0 L760.0,304.0 Z" fill="#b48ae0"/>
<path d="M807.8,344.0 L858.3,315.4 L858.3,344.0 L838.1,354.1 L804.4,355.8 Z" fill="#a47fcc"/>
<path d="M779.2,365.9 C779.2,365.9 789.6,370.3 799.4,370.9 C809.2,371.5 828.0,371.2 838.1,369.3 C848.2,367.4 860.0,359.2 860.0,359.2 C860.0,359.2 856.2,355.2 860.7,354.2 C865.2,353.2 878.0,352.0 886.7,353.1 C895.4,354.2 905.5,357.3 912.7,360.7 C919.9,364.1 930.0,373.7 930.0,373.7 C930.0,373.7 933.3,384.5 933.3,384.5 C933.3,384.5 947.2,387.0 951.7,391.0 C956.2,395.0 958.9,401.8 960.3,408.3 C961.7,414.8 961.7,422.7 960.3,430.0 C958.9,437.3 955.2,446.7 952.0,452.0 C948.8,457.3 941.0,462.0 941.0,462.0 C941.0,462.0 940.9,439.2 940.6,431.8 C940.3,424.4 940.9,421.2 939.2,417.3 C937.5,413.4 934.6,410.2 930.5,408.7 C926.4,407.2 914.8,408.3 914.8,408.3 C914.8,408.3 913.0,393.5 908.3,388.8 C903.6,384.1 895.0,380.9 886.7,380.2 C878.4,379.5 866.3,381.6 858.5,384.5 C850.7,387.4 849.6,395.7 839.8,397.9 C829.9,400.1 809.5,399.3 799.4,397.9 C789.3,396.5 779.2,389.5 779.2,389.5 C779.2,389.5 779.2,365.9 779.2,365.9 Z" fill="url(#gm)"/>
<path d="M940.6,431.8 L941.0,460.0 L939.9,470.7 L930.5,480.8 L911.0,499.6 L890.1,503.9 L908.9,492.4 L923.3,475.1 L934.9,450.5 Z" fill="#716284"/>
<path d="M976.7,433.2 L978.0,470.0 L975.6,501.6 L960.2,540.2 L929.4,527.4 L929.0,506.8 L955.0,475.1 Z" fill="url(#gn)"/>
<path d="M874.1,549.0 L890.9,505.7 L890.9,561.0 Z" fill="#6f6282"/>
<path d="M890.9,505.7 L910.1,500.9 L900.5,534.6 L908.9,541.8 L900.5,575.5 L890.9,561.0 Z" fill="#9676bb"/>
<path d="M908.9,541.8 C908.9,541.8 923.2,541.4 929.4,543.0 C935.6,544.6 941.8,547.6 946.2,551.4 C950.6,555.2 953.8,560.2 955.8,565.8 C957.8,571.4 957.9,579.2 958.3,585.1 C958.7,591.0 958.3,601.0 958.3,601.0 C958.3,601.0 937.8,601.0 937.8,601.0 C937.8,601.0 937.2,585.1 934.2,580.3 C931.2,575.4 925.4,572.7 919.8,571.9 C914.2,571.1 900.5,575.5 900.5,575.5 C900.5,575.5 908.9,541.8 908.9,541.8 Z" fill="url(#gh)"/>
<path d="M514.5,371.7 C514.5,371.7 521.6,379.0 525.6,379.6 C529.6,380.2 534.2,378.9 538.2,375.6 C542.2,372.3 549.3,359.8 549.3,359.8M551.6,370.9 C551.6,370.9 557.8,379.6 561.9,380.4 C566.0,381.2 570.8,381.4 576.1,375.6 C581.4,369.8 593.5,345.6 593.5,345.6M594.3,344.8 C594.3,344.8 608.6,348.0 608.6,348.0M610.1,369.3 C610.1,369.3 612.7,377.0 615.7,378.8 C618.7,380.6 623.6,383.0 628.3,380.4 C633.0,377.8 644.1,363.0 644.1,363.0M619.6,307.6 C619.6,307.6 625.1,313.6 628.3,313.2 C631.5,312.8 638.6,305.3 638.6,305.3M669.6,328.8 C669.6,328.8 681.1,297.8 685.0,290.3 C688.9,282.8 690.4,283.5 692.7,283.9 C695.1,284.3 698.7,288.3 699.1,292.8 C699.5,297.3 698.5,304.4 695.3,310.8 C692.1,317.2 685.1,324.0 679.9,331.4 C674.7,338.8 668.1,346.9 664.0,355.0 C659.9,363.1 657.0,373.3 655.0,380.0 C653.0,386.7 652.0,395.0 652.0,395.0M669.6,364.8 C669.6,364.8 690.1,357.1 690.1,357.1M705.5,357.1 C705.5,357.1 716.3,355.4 721.0,353.2 C725.7,351.0 731.2,347.4 733.8,344.2 C736.4,341.0 737.7,336.6 736.4,334.0 C735.1,331.4 729.1,328.4 726.1,328.8 C723.1,329.2 720.5,332.2 718.4,336.5 C716.3,340.8 715.5,349.6 713.3,354.5 C711.1,359.4 705.0,366.0 705.0,366.0M695.3,364.8 C695.3,364.8 700.4,374.8 705.5,377.6 C710.6,380.4 719.7,381.9 726.1,381.5 C732.5,381.1 739.0,379.2 744.1,375.1 C749.2,371.0 756.9,357.1 756.9,357.1M561.1,417.3 C561.1,417.3 547.5,438.4 540.0,450.0 C532.5,461.6 522.1,481.0 516.1,487.2 C510.1,493.4 508.1,488.8 504.2,487.2 C500.2,485.6 492.4,477.7 492.4,477.7M627.5,401.9 C627.5,401.9 612.9,423.4 605.0,435.0 C597.1,446.6 586.2,464.9 580.1,471.8 C574.0,478.7 573.0,477.8 568.3,476.6 C563.6,475.4 551.7,464.7 551.7,464.7M606.2,475.4 C606.2,475.4 616.5,488.8 622.8,489.6 C629.1,490.4 637.2,485.6 644.1,480.1 C651.0,474.6 658.8,457.8 664.3,456.4 C669.8,455.0 672.3,468.6 677.3,471.8 C682.2,475.0 689.6,475.0 694.0,475.4 C698.4,475.8 703.4,474.2 703.4,474.2M698.7,399.5 C698.7,399.5 711.3,395.5 715.3,397.1 C719.2,398.7 722.4,409.0 722.4,409.0M691.6,437.4 C691.6,437.4 699.5,445.1 703.4,446.9 C707.3,448.7 715.3,448.1 715.3,448.1M647.7,392.4 C647.7,392.4 655.8,406.6 660.7,406.6 C665.6,406.6 677.3,392.4 677.3,392.4M805.4,419.1 C805.4,419.1 793.9,443.3 788.0,455.0 C782.1,466.7 775.2,483.2 769.8,489.1 C764.4,495.0 760.1,492.3 755.6,490.3 C751.1,488.3 742.5,477.2 742.5,477.2M869.4,403.7 C869.4,403.7 856.5,428.1 850.0,440.0 C843.5,451.9 835.8,468.3 830.3,474.9 C824.8,481.5 822.0,480.6 817.2,479.6 C812.5,478.6 801.8,468.9 801.8,468.9M925.1,427.4 C925.1,427.4 913.7,448.3 908.0,458.0 C902.3,467.7 896.8,479.9 890.8,485.5 C884.8,491.1 877.3,492.9 871.8,491.5 C866.2,490.1 857.5,477.2 857.5,477.2M518.4,603.3 C518.4,603.3 510.0,623.9 504.2,629.0 C498.4,634.1 490.1,635.3 483.7,634.2 C477.3,633.1 465.7,622.6 465.7,622.6M519.7,608.5 C519.7,608.5 530.8,628.6 537.6,631.6 C544.5,634.6 553.5,631.4 560.8,626.5 C568.1,621.6 575.7,605.9 581.3,602.0 C586.9,598.1 588.6,604.1 594.2,603.3 C599.8,602.4 614.7,596.9 614.7,596.9M617.3,621.3 C617.3,621.3 624.1,632.5 630.1,634.2 C636.1,635.9 646.0,634.2 653.3,631.6 C660.6,629.0 668.7,618.7 673.8,618.7 C678.9,618.7 684.1,631.6 684.1,631.6M634.0,539.1 C634.0,539.1 642.3,548.1 645.5,548.1 C648.7,548.1 647.3,540.7 653.3,539.1 C659.3,537.5 681.5,538.6 681.5,538.6M705.7,536.2 C705.7,536.2 730.5,535.0 736.5,533.7 C742.5,532.4 741.7,528.5 741.7,528.5M777.6,564.5 C777.6,564.5 768.6,560.6 764.8,564.5 C760.9,568.4 756.4,581.8 754.5,587.6 C752.6,593.4 753.2,599.2 753.2,599.2M778.9,587.6 C778.9,587.6 786.0,590.6 787.9,588.9 C789.8,587.2 790.5,577.4 790.5,577.4M862.4,510.6 C862.4,510.6 854.3,505.5 849.6,510.6 C844.9,515.7 837.9,534.1 834.2,541.4 C830.6,548.7 827.7,554.2 827.7,554.2M854.7,577.4 C854.7,577.4 848.2,572.2 844.4,576.1 C840.5,580.0 834.6,592.1 831.6,600.5 C828.6,608.9 826.5,626.2 826.5,626.2M799.5,626.2 C799.5,626.2 804.0,639.5 808.5,641.6 C813.0,643.7 826.5,639.0 826.5,639.0M921.5,588.9 C921.5,588.9 913.0,612.6 906.1,621.0 C899.2,629.4 888.1,636.9 880.4,639.0 C872.7,641.1 864.0,636.5 859.9,633.9 C855.8,631.3 856.0,623.6 856.0,623.6M708.3,636.5 C708.3,636.5 726.6,622.9 735.2,622.3 C743.8,621.6 749.2,633.2 759.7,632.6 C770.2,632.0 798.2,618.5 798.2,618.5M494.0,480.0 C494.0,480.0 502.5,489.0 506.8,489.0 C511.1,489.0 519.7,480.0 519.7,480.0M653.0,482.0 C653.0,482.0 661.7,489.0 667.0,489.0 C672.3,489.0 685.0,482.0 685.0,482.0" fill="none" stroke="#b282da" stroke-width="1.8" stroke-linecap="round"/>
<path d="M514.5,371.7 C514.5,371.7 521.6,379.0 525.6,379.6 C529.6,380.2 534.2,378.9 538.2,375.6 C542.2,372.3 549.3,359.8 549.3,359.8M551.6,370.9 C551.6,370.9 557.8,379.6 561.9,380.4 C566.0,381.2 570.8,381.4 576.1,375.6 C581.4,369.8 593.5,345.6 593.5,345.6M594.3,344.8 C594.3,344.8 608.6,348.0 608.6,348.0M610.1,369.3 C610.1,369.3 612.7,377.0 615.7,378.8 C618.7,380.6 623.6,383.0 628.3,380.4 C633.0,377.8 644.1,363.0 644.1,363.0M619.6,307.6 C619.6,307.6 625.1,313.6 628.3,313.2 C631.5,312.8 638.6,305.3 638.6,305.3M669.6,328.8 C669.6,328.8 681.1,297.8 685.0,290.3 C688.9,282.8 690.4,283.5 692.7,283.9 C695.1,284.3 698.7,288.3 699.1,292.8 C699.5,297.3 698.5,304.4 695.3,310.8 C692.1,317.2 685.1,324.0 679.9,331.4 C674.7,338.8 668.1,346.9 664.0,355.0 C659.9,363.1 657.0,373.3 655.0,380.0 C653.0,386.7 652.0,395.0 652.0,395.0M669.6,364.8 C669.6,364.8 690.1,357.1 690.1,357.1M705.5,357.1 C705.5,357.1 716.3,355.4 721.0,353.2 C725.7,351.0 731.2,347.4 733.8,344.2 C736.4,341.0 737.7,336.6 736.4,334.0 C735.1,331.4 729.1,328.4 726.1,328.8 C723.1,329.2 720.5,332.2 718.4,336.5 C716.3,340.8 715.5,349.6 713.3,354.5 C711.1,359.4 705.0,366.0 705.0,366.0M695.3,364.8 C695.3,364.8 700.4,374.8 705.5,377.6 C710.6,380.4 719.7,381.9 726.1,381.5 C732.5,381.1 739.0,379.2 744.1,375.1 C749.2,371.0 756.9,357.1 756.9,357.1M561.1,417.3 C561.1,417.3 547.5,438.4 540.0,450.0 C532.5,461.6 522.1,481.0 516.1,487.2 C510.1,493.4 508.1,488.8 504.2,487.2 C500.2,485.6 492.4,477.7 492.4,477.7M627.5,401.9 C627.5,401.9 612.9,423.4 605.0,435.0 C597.1,446.6 586.2,464.9 580.1,471.8 C574.0,478.7 573.0,477.8 568.3,476.6 C563.6,475.4 551.7,464.7 551.7,464.7M606.2,475.4 C606.2,475.4 616.5,488.8 622.8,489.6 C629.1,490.4 637.2,485.6 644.1,480.1 C651.0,474.6 658.8,457.8 664.3,456.4 C669.8,455.0 672.3,468.6 677.3,471.8 C682.2,475.0 689.6,475.0 694.0,475.4 C698.4,475.8 703.4,474.2 703.4,474.2M698.7,399.5 C698.7,399.5 711.3,395.5 715.3,397.1 C719.2,398.7 722.4,409.0 722.4,409.0M691.6,437.4 C691.6,437.4 699.5,445.1 703.4,446.9 C707.3,448.7 715.3,448.1 715.3,448.1M647.7,392.4 C647.7,392.4 655.8,406.6 660.7,406.6 C665.6,406.6 677.3,392.4 677.3,392.4M805.4,419.1 C805.4,419.1 793.9,443.3 788.0,455.0 C782.1,466.7 775.2,483.2 769.8,489.1 C764.4,495.0 760.1,492.3 755.6,490.3 C751.1,488.3 742.5,477.2 742.5,477.2M869.4,403.7 C869.4,403.7 856.5,428.1 850.0,440.0 C843.5,451.9 835.8,468.3 830.3,474.9 C824.8,481.5 822.0,480.6 817.2,479.6 C812.5,478.6 801.8,468.9 801.8,468.9M925.1,427.4 C925.1,427.4 913.7,448.3 908.0,458.0 C902.3,467.7 896.8,479.9 890.8,485.5 C884.8,491.1 877.3,492.9 871.8,491.5 C866.2,490.1 857.5,477.2 857.5,477.2M518.4,603.3 C518.4,603.3 510.0,623.9 504.2,629.0 C498.4,634.1 490.1,635.3 483.7,634.2 C477.3,633.1 465.7,622.6 465.7,622.6M519.7,608.5 C519.7,608.5 530.8,628.6 537.6,631.6 C544.5,634.6 553.5,631.4 560.8,626.5 C568.1,621.6 575.7,605.9 581.3,602.0 C586.9,598.1 588.6,604.1 594.2,603.3 C599.8,602.4 614.7,596.9 614.7,596.9M617.3,621.3 C617.3,621.3 624.1,632.5 630.1,634.2 C636.1,635.9 646.0,634.2 653.3,631.6 C660.6,629.0 668.7,618.7 673.8,618.7 C678.9,618.7 684.1,631.6 684.1,631.6M634.0,539.1 C634.0,539.1 642.3,548.1 645.5,548.1 C648.7,548.1 647.3,540.7 653.3,539.1 C659.3,537.5 681.5,538.6 681.5,538.6M705.7,536.2 C705.7,536.2 730.5,535.0 736.5,533.7 C742.5,532.4 741.7,528.5 741.7,528.5M777.6,564.5 C777.6,564.5 768.6,560.6 764.8,564.5 C760.9,568.4 756.4,581.8 754.5,587.6 C752.6,593.4 753.2,599.2 753.2,599.2M778.9,587.6 C778.9,587.6 786.0,590.6 787.9,588.9 C789.8,587.2 790.5,577.4 790.5,577.4M862.4,510.6 C862.4,510.6 854.3,505.5 849.6,510.6 C844.9,515.7 837.9,534.1 834.2,541.4 C830.6,548.7 827.7,554.2 827.7,554.2M854.7,577.4 C854.7,577.4 848.2,572.2 844.4,576.1 C840.5,580.0 834.6,592.1 831.6,600.5 C828.6,608.9 826.5,626.2 826.5,626.2M799.5,626.2 C799.5,626.2 804.0,639.5 808.5,641.6 C813.0,643.7 826.5,639.0 826.5,639.0M921.5,588.9 C921.5,588.9 913.0,612.6 906.1,621.0 C899.2,629.4 888.1,636.9 880.4,639.0 C872.7,641.1 864.0,636.5 859.9,633.9 C855.8,631.3 856.0,623.6 856.0,623.6M708.3,636.5 C708.3,636.5 726.6,622.9 735.2,622.3 C743.8,621.6 749.2,633.2 759.7,632.6 C770.2,632.0 798.2,618.5 798.2,618.5M494.0,480.0 C494.0,480.0 502.5,489.0 506.8,489.0 C511.1,489.0 519.7,480.0 519.7,480.0M653.0,482.0 C653.0,482.0 661.7,489.0 667.0,489.0 C672.3,489.0 685.0,482.0 685.0,482.0" fill="none" stroke="#9468b6" stroke-width="0.8" stroke-linecap="round" transform="translate(0,-0.6)"/>
<path d="M539.8,322.7 C539.8,322.7 535.1,337.2 533.0,345.0 C530.9,352.8 527.1,369.3 527.1,369.3M576.9,321.1 C576.9,321.1 572.1,336.8 570.0,345.0 C567.9,353.2 564.3,370.1 564.3,370.1M601.4,321.9 C601.4,321.9 596.7,338.5 596.7,338.5M634.6,323.5 C634.6,323.5 630.8,338.4 629.0,346.0 C627.2,353.6 623.6,369.3 623.6,369.3M542.2,405.4 C542.2,405.4 529.1,438.6 529.1,438.6M592.0,407.8 C592.0,407.8 582.5,441.0 582.5,441.0M653.6,409.0 C653.6,409.0 646.4,429.3 643.0,440.0 C639.6,450.7 633.5,473.0 633.5,473.0M784.0,410.8 C784.0,410.8 776.9,439.3 776.9,439.3M833.8,416.8 C833.8,416.8 829.1,444.0 829.1,444.0M897.9,406.1 C897.9,406.1 893.2,425.5 891.0,435.0 C888.8,444.5 884.8,463.0 884.8,463.0M502.9,558.4 C502.9,558.4 497.4,576.6 495.0,585.0 C492.6,593.4 488.8,608.5 488.8,608.5M547.9,557.1 C547.9,557.1 542.8,603.3 542.8,603.3M598.0,562.2 C598.0,562.2 589.0,587.9 589.0,587.9M650.7,563.5 C650.7,563.5 647.5,575.8 646.0,582.0 C644.5,588.2 641.7,600.8 641.7,600.8M717.3,496.4 C717.3,496.4 709.5,522.1 709.5,522.1M874.0,513.1 C874.0,513.1 858.4,534.7 850.0,545.0 C841.6,555.3 823.9,574.8 823.9,574.8M879.1,585.1 C879.1,585.1 877.8,603.1 877.8,603.1M587.2,327.4 C587.2,327.4 589.8,317.8 591.2,316.3 C592.7,314.9 595.9,318.7 595.9,318.7M582.5,333.7 C582.5,333.7 588.8,341.6 588.8,341.6M568.5,587.9 C568.5,587.9 572.3,594.3 572.3,594.3" fill="none" stroke="#7a5a98" stroke-width="0.8" stroke-linecap="round"/>
<path d="M458.3,340.0 C458.7,336.3 458.0,339.0 459.3,333.3 C460.6,327.6 461.9,319.5 464.7,311.7 C467.5,303.9 469.0,300.2 473.3,294.3 C477.6,288.4 480.7,286.1 486.3,282.4 C491.9,278.7 494.6,278.3 501.5,275.9 C508.4,273.5 512.3,272.0 521.0,270.5 C529.7,269.0 534.6,270.1 544.8,268.3 C555.0,266.5 561.2,263.3 572.0,261.4 C582.8,259.5 587.4,260.5 599.0,258.6 C610.6,256.7 619.5,255.8 630.0,252.1 C640.5,248.4 643.0,243.9 651.7,240.2 C660.4,236.5 663.3,235.2 673.3,233.7 C683.3,232.2 692.0,231.7 701.5,232.6 C711.0,233.5 714.1,234.8 721.0,238.0 C727.9,241.2 731.4,244.0 736.2,248.8 C741.0,253.6 742.0,256.2 744.8,261.8 C747.6,267.4 750.3,277.0 750.3,277.0 C750.3,277.0 758.0,271.8 764.3,268.3 C770.6,264.8 774.3,262.3 781.7,259.7 C789.1,257.1 794.3,255.3 801.2,255.3 C808.1,255.3 810.1,255.5 816.3,259.7 C822.5,263.9 824.5,269.0 832.3,276.3 C840.1,283.6 849.9,289.8 855.5,296.1 C861.1,302.4 859.5,298.7 860.4,307.7 C861.3,316.7 860.2,341.2 860.2,341.2 C860.2,341.2 868.3,339.2 875.8,339.0 C883.3,338.8 888.4,337.9 897.5,340.1 C906.6,342.3 913.1,345.3 921.3,349.8 C929.5,354.3 933.1,358.5 938.7,362.8 C944.3,367.1 949.5,371.5 949.5,371.5 C949.5,371.5 961.2,377.1 966.8,382.3 C972.4,387.5 974.9,390.1 977.7,397.5 C980.5,404.9 980.5,408.4 980.9,419.2 C981.3,430.0 980.6,441.5 979.8,451.7 C979.0,461.9 977.7,460.1 976.9,470.0 C976.1,479.9 977.4,491.2 975.7,501.3 C974.0,511.4 971.5,512.8 968.5,520.5 C965.5,528.2 960.8,539.8 960.8,539.8 C960.8,539.8 969.6,545.5 973.3,551.8 C977.0,558.1 978.1,558.6 979.3,571.1 C980.5,583.6 979.8,599.9 979.3,614.4 C978.8,628.9 977.6,632.9 976.7,643.5 C975.8,654.1 976.5,657.8 974.6,667.4 C972.7,677.0 971.1,681.7 967.0,691.3 C962.9,700.9 960.9,706.5 953.9,715.2 C946.9,723.9 941.8,728.1 932.2,734.8 C922.6,741.5 917.0,745.2 906.1,748.9 C895.2,752.6 889.1,753.3 877.8,753.3 C866.5,753.3 849.6,748.9 849.6,748.9 C849.6,748.9 833.9,753.2 823.5,754.3 C813.1,755.4 806.5,755.2 797.4,754.3 C788.3,753.4 788.7,752.0 778.1,750.0 C767.5,748.0 744.4,744.1 744.4,744.1 C744.4,744.1 728.7,749.6 720.0,751.0 C711.3,752.4 710.2,752.2 701.1,751.3 C692.0,750.4 674.6,746.5 674.6,746.5 C674.6,746.5 658.2,750.6 648.1,751.3 C638.0,752.0 632.7,752.1 624.1,750.1 C615.5,748.1 611.3,744.5 605.0,741.5 C598.7,738.5 592.8,734.9 592.8,734.9 C592.8,734.9 581.5,741.4 573.3,743.6 C565.1,745.8 561.2,746.0 551.7,745.8 C542.2,745.6 525.7,742.5 525.7,742.5 C525.7,742.5 511.8,745.5 504.0,746.8 C496.2,748.1 494.9,749.4 486.7,749.0 C478.5,748.6 471.5,748.2 462.8,744.7 C454.1,741.2 449.8,738.6 443.3,731.7 C436.8,724.8 435.1,720.8 430.3,710.0 C425.5,699.2 423.6,690.5 419.5,677.5 C415.4,664.5 413.2,656.7 409.8,645.0 C406.4,633.3 403.9,632.0 402.5,619.0 C401.1,606.0 401.3,593.5 403.0,580.0 C404.7,566.5 407.5,560.8 410.8,551.7 C414.1,542.6 415.2,540.8 419.5,534.3 C423.8,527.8 432.5,519.2 432.5,519.2 C432.5,519.2 437.9,491.0 437.9,491.0 C437.9,491.0 434.5,483.2 433.6,475.8 C432.7,468.4 432.9,461.4 433.6,454.2 C434.3,447.0 435.3,447.2 437.2,440.0 C439.1,432.8 440.3,426.6 443.2,418.2 C446.1,409.8 448.0,405.5 451.7,397.8 C455.4,390.1 461.9,379.7 461.9,379.7 C461.9,379.7 460.5,379.2 459.5,373.7 C458.5,368.2 457.3,358.7 457.1,352.0 C456.9,345.3 457.9,343.7 458.3,340.0 Z" fill="none" stroke="#2072ff" stroke-width="3" stroke-linejoin="round"/>
<path d="M701.5,358 L712.5,461" stroke="#196ef0" stroke-width="1.6"/>
<path d="M713,486 L699.5,617" stroke="#24a225" stroke-width="1.6"/>
<path d="M723,472.4 L780,473 L840,474.2 L892,474.7" stroke="#da1e28" stroke-width="2"/>
<path d="M689,331.5 L711,331.5 L711.5,359.5 L688.5,359.5 Z" fill="#196ef0"/>
<path d="M703.3,460 L723.8,460 L723.8,486.5 L703.3,486.5 Z" fill="#ffffff"/>
<path d="M891.8,461.5 L910,461.5 L910,488 L891.8,488 Z" fill="#da1e28"/>
<path d="M688,616 L709.5,616 L709.5,644 L688,644 Z" fill="#24a225"/>
</svg>
<div id="stl">
<svg width="91" height="97" viewBox="0 0 91 97">
<path d="M7,6 Q7,-2 15,-2 L52,-2 L52,22 Q52,31 61,31 L82,31 L82,86 Q82,93 75,93 L14,93 Q7,93 7,86 Z" fill="#3d47c8"/>
<path d="M56,-2 L82,25 L82,26 L62,26 Q56,26 56,20 Z" fill="#3d47c8"/>
<rect x="-6" y="9.5" width="47" height="33" rx="6" fill="#fff"/>
<rect x="-4" y="13.5" width="41" height="25" rx="3" fill="#3d47c8"/>
<text x="1.7" y="31.3" font-family="Liberation Sans" font-weight="bold" font-size="14" fill="#fff" textLength="23.6" lengthAdjust="spacingAndGlyphs">STL</text>
<rect x="20" y="47" width="49" height="4.6" fill="#fff"/>
<rect x="20" y="62" width="49" height="4.3" fill="#fff"/>
<rect x="20" y="76" width="49" height="4.5" fill="#fff"/>
</svg>
</div>
<div id="panel"></div>
<svg class="abs" style="left:0;top:262px" width="8" height="34" viewBox="0 0 8 34"><path d="M6.5,3.5 L0.5,17 L6.5,30.5" fill="#fff" stroke="#c6c6c6" stroke-width="1"/><rect x="5.9" y="4" width="3" height="26" fill="#fff"/></svg>
<div class="t lab" style="left:21.6px;top:273.35px;color:#dc2a36">X</div>
<div class="fld" style="left:39.1px;top:263.1px;width:178.8px;height:32.2px;border-bottom-width:2px;border-bottom-color:#a6a6a6"></div>
<div class="fld" style="left:225.9px;top:263.1px;width:178.9px;height:32.2px;border-bottom-width:2px;border-bottom-color:#a6a6a6"></div>
<div class="t val" style="left:44.7px;top:273.35px;">112.4704</div>
<div class="t unit" style="left:185.6px;top:273.35px;">mm</div>
<div class="t val" style="left:231.7px;top:273.35px;">100</div>
<div class="t unit" style="left:386.2px;top:273.35px;">%</div>
<div class="t lab" style="left:21.6px;top:314.95px;color:#2ea24a">Y</div>
<div class="fld" style="left:39.1px;top:304.1px;width:178.8px;height:32.8px;border-bottom-width:1px;"></div>
<div class="fld" style="left:225.9px;top:304.1px;width:178.9px;height:32.8px;border-bottom-width:1px;"></div>
<div class="t val" style="left:44.7px;top:314.95px;">120.3452</div>
<div class="t unit" style="left:185.6px;top:314.95px;">mm</div>
<div class="t val" style="left:231.7px;top:314.95px;">100</div>
<div class="t unit" style="left:386.2px;top:314.95px;">%</div>
<div class="t lab" style="left:21.6px;top:355.45px;color:#2a6fe6">Z</div>
<div class="fld" style="left:39.1px;top:346.2px;width:178.8px;height:32.0px;border-bottom-width:1px;"></div>
<div class="fld" style="left:225.9px;top:346.2px;width:178.9px;height:32.0px;border-bottom-width:1px;"></div>
<div class="t val" style="left:44.7px;top:355.45px;">26</div>
<div class="t unit" style="left:185.6px;top:355.45px;">mm</div>
<div class="t val" style="left:231.7px;top:355.45px;">100</div>
<div class="t unit" style="left:386.2px;top:355.45px;">%</div>
<div class="cb" style="left:119.1px;top:398.2px"></div>
<div class="cb" style="left:119.1px;top:434.5px"></div>
<svg class="abs" style="left:119px;top:434px" width="22" height="22" viewBox="0 0 22 22"><path d="M7.6,11.9 L9.5,14.05 L14.05,9" fill="none" stroke="#0a1020" stroke-width="2.1" stroke-linecap="round" stroke-linejoin="round"/></svg>
<div class="t ctext" style="left:148.2px;top:402.65px;">Snap Scaling</div>
<div class="t ctext" style="left:148.2px;top:439.65px;">Uniform Scaling</div>
<svg class="abs" style="left:52px;top:410px" width="38" height="35" viewBox="0 0 38 35"><path d="M8.85,20.6 A9.7,9.7 0 1 0 18.5,10.1 L9.7,10.1 M14.7,5.1 L9.7,10.1 L14.7,15.2" fill="none" stroke="#08073f" stroke-width="2.1" stroke-linecap="round" stroke-linejoin="round"/></svg>
<svg class="abs" style="left:7px;top:686px" width="14" height="11" viewBox="0 0 14 11"><path d="M1.2,9 L7,3 L12.8,9" fill="none" stroke="#777" stroke-width="1.4"/></svg>
<div class="t scn" style="left:38.4px;top:685.95px;">Object list</div>
<svg class="abs" style="left:7px;top:720px" width="20" height="20" viewBox="0 0 20 20"><path d="M4,14 L14.5,4.5 L16.8,6.8 L6.5,16 L3.8,16.3 Z" fill="#5e5e5e"/><rect x="1" y="16.8" width="18" height="1.7" fill="#5e5e5e"/></svg>
<div class="t scn" style="left:46.0px;top:723.35px;">STL1463</div>
<div class="t scn" style="left:5.2px;top:755.95px;">112.5 x 120.3 x 26.0 mm</div>
<svg class="abs" style="left:0;top:785px" width="200" height="40" viewBox="0 0 200 40"><g fill="none" stroke="#666" stroke-width="2.1" stroke-linejoin="round" stroke-linecap="round">
<polygon points="21.5,8.0 33.4,14.5 33.4,27.5 21.5,34.0 9.9,27.5 9.9,14.5"/>
<polyline points="9.9,14.5 21.5,20.6 33.4,14.5"/>
<polyline points="21.5,20.6 21.5,34.0"/>
<polygon points="50.5,15.5 56.1,9.5 73.0,9.5 67.0,15.5"/>
<polygon points="67.0,15.5 73.0,9.5 73.0,26.0 67.0,32.0"/>
<rect x="50.5" y="15.5" width="16.5" height="16.5" fill="#666"/>
<rect x="90.5" y="15.5" width="16.5" height="16.5"/>
<polygon points="90.5,15.5 96.1,9.5 113.0,9.5 107.0,15.5" fill="#666"/>
<polygon points="107.0,15.5 113.0,9.5 113.0,26.0 107.0,32.0"/>
<rect x="136.6" y="16.4" width="16.2" height="16" />
<polygon points="130.0,9.5 145.7,9.5 152.8,16.4 136.6,16.4"/>
<polygon points="130.0,9.5 136.6,16.4 136.6,32.2 130.0,25.8" fill="#666"/>
<rect x="169.9" y="16.4" width="16.5" height="16" />
<polygon points="169.9,16.4 176.5,9.5 193.0,9.5 186.4,16.4"/>
<polygon points="186.4,16.4 193.0,9.5 193.0,25.8 186.4,32.4" fill="#666"/>
</g></svg>
</body></html>
